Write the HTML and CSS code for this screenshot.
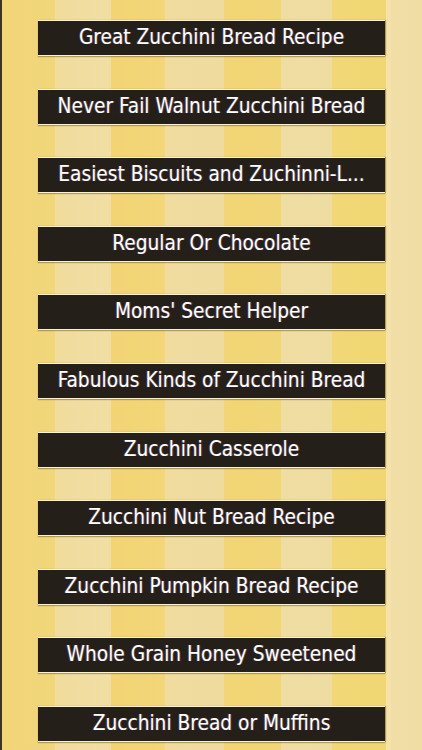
FILE: index.html
```html
<!DOCTYPE html>
<html>
<head>
<meta charset="utf-8">
<link rel="stylesheet" href="styles.css">
</head>
<body>
<div class="page">
  <ul class="menu">
    <li class="item">Great Zucchini Bread Recipe</li>
    <li class="item">Never Fail Walnut Zucchini Bread</li>
    <li class="item">Easiest Biscuits and Zuchinni-L...</li>
    <li class="item">Regular Or Chocolate</li>
    <li class="item">Moms' Secret Helper</li>
    <li class="item">Fabulous Kinds of Zucchini Bread</li>
    <li class="item">Zucchini Casserole</li>
    <li class="item">Zucchini Nut Bread Recipe</li>
    <li class="item">Zucchini Pumpkin Bread Recipe</li>
    <li class="item">Whole Grain Honey Sweetened</li>
    <li class="item">Zucchini Bread or Muffins</li>
  </ul>
</div>
</body>
</html>
```
FILE: styles.css
```css
html, body {
  margin: 0;
  padding: 0;
  height: 100%;
  overflow: hidden;
}
body {
  background:
    linear-gradient(to right,
      #f2d577 0px, #f1d67a 55px,
      #f0dc9c 55px, #f1dea3 111px,
      #f2d473 111px, #f2d678 165px,
      #f0dc9f 165px, #efdb9e 224px,
      #f2d574 224px, #f1d677 281px,
      #f0dda2 281px, #efdca0 332px,
      #f2d776 332px, #f1d674 386px,
      #f5e2a8 386px, #f5e2a8 391px,
      #f0dea6 391px, #efdda4 422px);
  font-family: "DejaVu Sans Condensed", "DejaVu Sans", sans-serif;
}
.page {
  height: 100%;
  border-left: 2px solid #3a3420;
  box-sizing: border-box;
}
.menu {
  list-style: none;
  margin: 0;
  padding: 20px 0 0 36px;
  display: flex;
  flex-direction: column;
  gap: 32.6px;
}
.item {
  width: 347px;
  height: 36px;
  box-sizing: border-box;
  background: #241f19;
  border-top: 1px solid #fbf2cf;
  border-bottom: 1px solid #fbf2cf;
  box-shadow: 0 1px 1px rgba(120, 100, 50, 0.5), 1px 0 1px rgba(90, 80, 40, 0.4);
  color: #ffffff;
  font-size: 20.7px;
  line-height: 33px;
  text-align: center;
  white-space: nowrap;
  overflow: hidden;
  text-shadow: -1px 0 0 rgba(120, 110, 220, 0.35), 1px 0 0 rgba(220, 120, 60, 0.3);
}
```
